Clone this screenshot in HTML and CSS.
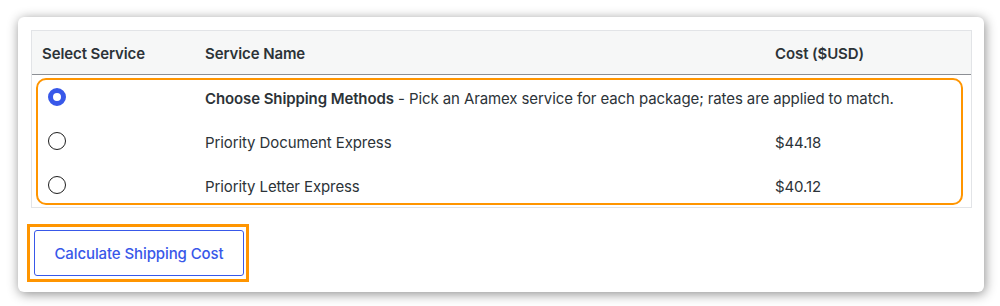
FILE: index.html
```
<!DOCTYPE html>
<html lang="en">

<head>
    <meta charset="UTF-8">
    <meta name="viewport" content="width=device-width, initial-scale=1.0">
    <title>Aramex Shipping</title>

    <link rel="stylesheet" href="styles.css">
</head>

<body>
    <div class="card">
        <div class="serviceTable">
            <div class="row head">
                <div>Select Service</div>
                <div>Service Name</div>
                <div>Cost ($USD)</div>
            </div>
            <div class="body">
                <div class="row">
                    <div><span class="radio checked"></span></div>
                    <div class="wide"><b>Choose Shipping Methods</b> - Pick an Aramex service for each package; rates are applied to match.</div>
                </div>
                <div class="row">
                    <div><span class="radio"></span></div>
                    <div>Priority Document Express</div>
                    <div>$44.18</div>
                </div>
                <div class="row">
                    <div><span class="radio"></span></div>
                    <div>Priority Letter Express</div>
                    <div>$40.12</div>
                </div>
                <div class="highlight"></div>
            </div>
        </div>
        <div class="btnWrap">
            <div class="btn">Calculate Shipping Cost</div>
        </div>
    </div>
</body>

</html>
```

FILE: styles.css
```
* {
    box-sizing: border-box;
}

html {
    background-color: #fff;
}

body {
    margin: 0;
    min-height: 306px;
    font-family: Inter, "Liberation Sans", sans-serif;
    color: #2c3338;
    padding: 17px 16px 14px 18px;
}

.card {
    width: 966px;
    height: 275px;
    background-color: #fff;
    border-radius: 6px;
    box-shadow: 1px 2px 12px rgba(0, 0, 0, 0.45);
    padding: 13px 12px 0 13px;
}

.serviceTable {
    border: 1px solid #e2e4e7;
}

.row {
    display: grid;
    grid-template-columns: 163px 570px 1fr;
    align-items: center;
    height: 44px;
    padding-left: 10px;
    padding-top: 2px;
    font-size: 15px;
    white-space: nowrap;
}

.row.head {
    height: 44px;
    background-color: #f6f7f7;
    border-bottom: 1px solid #8c8f94;
    font-weight: 600;
    letter-spacing: -0.1px;
}

.body {
    position: relative;
}

.body .row {
    padding-left: 16px;
    grid-template-columns: 157px 570px 1fr;
    letter-spacing: -0.1px;
}

.body .wide {
    grid-column: 2 / 4;
}

.body b {
    font-weight: 600;
}

.radio {
    display: block;
    width: 18px;
    height: 18px;
    margin-top: -3px;
    border: 1.5px solid #1e1e1e;
    border-radius: 50%;
}

.radio.checked {
    border: 5px solid #3858e9;
}

.highlight {
    position: absolute;
    top: 3px;
    bottom: 2px;
    left: 4px;
    right: 8px;
    border: 2.5px solid #ff9500;
    border-radius: 10px;
}

.btnWrap {
    display: inline-block;
    margin-top: 16px;
    margin-left: -4px;
    border: 3px solid #ff9500;
    padding: 3px 2px 3px 4px;
}

.btn {
    width: 210px;
    height: 46px;
    border: 1px solid #3858e9;
    border-radius: 3px;
    color: #3858e9;
    font-size: 15px;
    font-weight: 500;
    text-align: center;
    line-height: 46px;
    letter-spacing: -0.1px;
}
```
